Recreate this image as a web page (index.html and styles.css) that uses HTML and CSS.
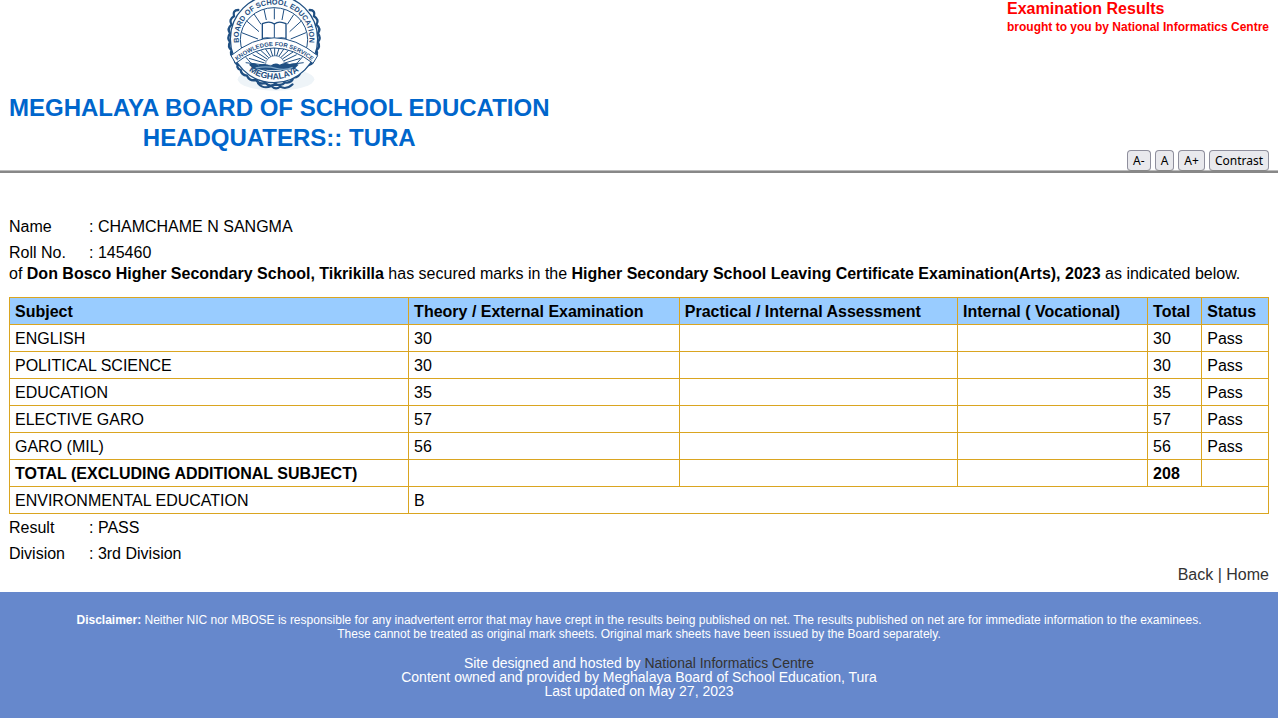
FILE: index.html
```html
<!DOCTYPE html>
<html lang="en">
<head>
<meta charset="utf-8">
<meta name="viewport" content="width=device-width, initial-scale=1">
<title>Examination Results</title>
<link rel="stylesheet" href="styles.css">
</head>
<body>
<header class="site-header">
  <div class="brand">
    <svg class="crest" viewBox="14 0 360 279" role="img" aria-label="Board of School Education Meghalaya crest">
      <defs>
        <path id="arc-top" d="M86 163A106 101 0 1 1 272 163"/>
        <path id="arc-bottom" d="M70 172A123 123 0 0 0 288 172"/>
        <path id="arc-motto" d="M66 184Q179 92 294 184"/>
      </defs>
      <ellipse cx="185" cy="238" rx="115" ry="34" fill="#eef4f8"/>
      <g fill="none" stroke="#1f4f82" stroke-width="7" stroke-linecap="round">
        <path d="M72 30q-18 0-13 19q-17 10-7 25q-15 12-5 26q-10 14 0 26q-8 14 5 25q-8 13 9 22q-3 16 13 22"/>
        <path d="M286 30q18 0 13 19q17 10 7 25q15 12 5 26q10 14 0 26q8 14-5 25q8 13-9 22q3 16-13 22"/>
        <path d="M72 190q-8 14 7 20q2 15 19 17q8 17 27 13q12 16 27 8q16 16 31 3q18 10 29-4q19 4 25-14q18-2 21-18q17-6 11-20"/>
        <path d="M131 250q17 19 40 8q13 13 26 2q20 10 38-7" stroke-width="6"/>
      </g>
      <circle cx="179" cy="117" r="131" fill="#fbfdfe" stroke="#1f4f82" stroke-width="4"/>
      <ellipse cx="179" cy="119" rx="101" ry="96" fill="#fff" stroke="#1f4f82" stroke-width="3"/>
      <g stroke="#1f4f82" stroke-width="3" fill="none">
        <path d="M156 60L149 28M180 58V25M203 60L209 28M140 73L119 42M219 73L238 44M134 95L96 62M226 95L262 62M131 117L82 98M229 117L275 98"/>
      </g>
      <path d="M144 71Q166 61 180 72Q194 61 215 71V116Q196 110 180 120Q164 110 144 116Z" fill="#fff" stroke="#1f4f82" stroke-width="4"/>
      <path d="M180 72V118" stroke="#1f4f82" stroke-width="3"/>
      <g stroke="#1f4f82" stroke-width="3">
        <path d="M150 195L94 188M151 189L104 175M154 183L115 164M158 177L126 156M163 173L138 150M169 170L153 146M175 168L167 143M181 167V142M187 168L195 143M193 170L209 146M199 173L224 150M204 177L236 156M208 183L247 164M211 189L258 175M212 195L268 188"/>
      </g>
      <path d="M153 196A29 29 0 0 1 211 196Z" fill="#fff" stroke="#1f4f82" stroke-width="2"/>
      <path d="M104 194Q118 185 132 196Q151 188 169 197Q183 185 196 194Q213 185 226 193Q240 188 253 194L240 207Q179 214 118 207Z" fill="#1f4f82"/>
      <path d="M124 204Q157 197 185 205T235 202" fill="none" stroke="#7ea6c8" stroke-width="4"/>
      <path d="M50 167Q179 60 310 167L296 190Q179 98 64 190Z" fill="#fff" stroke="#1f4f82" stroke-width="3"/>
      <g class="crest-text">
        <text font-size="22"><textPath href="#arc-top" startOffset="50%">BOARD OF SCHOOL EDUCATION</textPath></text>
        <text font-size="26"><textPath href="#arc-bottom" startOffset="50%">MEGHALAYA</textPath></text>
        <text font-size="18"><textPath href="#arc-motto" startOffset="50%">KNOWLEDGE FOR SERVICE</textPath></text>
      </g>
    </svg>
    <h1 class="board-name">MEGHALAYA BOARD OF SCHOOL EDUCATION<br>HEADQUATERS:: TURA</h1>
  </div>
  <div class="header-side">
    <div class="credit">
      <h2 class="credit-title">Examination Results</h2>
      <p class="credit-by">brought to you by National Informatics Centre</p>
    </div>
    <div class="tools">
      <button type="button">A-</button>
      <button type="button">A</button>
      <button type="button">A+</button>
      <button type="button">Contrast</button>
    </div>
  </div>
</header>
<main class="content">
  <dl class="details">
    <dt>Name</dt><dd>: CHAMCHAME N SANGMA</dd>
    <dt>Roll No.</dt><dd>: 145460</dd>
  </dl>
  <p class="statement">of <b>Don Bosco Higher Secondary School, Tikrikilla</b> has secured marks in the <b>Higher Secondary School Leaving Certificate Examination(Arts), 2023</b> as indicated below.</p>
  <table class="marks">
    <colgroup>
      <col class="col-subject"><col class="col-theory"><col class="col-practical"><col class="col-internal"><col class="col-total"><col class="col-status">
    </colgroup>
    <thead>
      <tr><th>Subject</th><th>Theory / External Examination</th><th>Practical / Internal Assessment</th><th>Internal ( Vocational)</th><th>Total</th><th>Status</th></tr>
    </thead>
    <tbody>
      <tr><td>ENGLISH</td><td>30</td><td></td><td></td><td>30</td><td>Pass</td></tr>
      <tr><td>POLITICAL SCIENCE</td><td>30</td><td></td><td></td><td>30</td><td>Pass</td></tr>
      <tr><td>EDUCATION</td><td>35</td><td></td><td></td><td>35</td><td>Pass</td></tr>
      <tr><td>ELECTIVE GARO</td><td>57</td><td></td><td></td><td>57</td><td>Pass</td></tr>
      <tr><td>GARO (MIL)</td><td>56</td><td></td><td></td><td>56</td><td>Pass</td></tr>
      <tr class="total-row"><td>TOTAL (EXCLUDING ADDITIONAL SUBJECT)</td><td></td><td></td><td></td><td>208</td><td></td></tr>
      <tr><td>ENVIRONMENTAL EDUCATION</td><td colspan="5">B</td></tr>
    </tbody>
  </table>
  <dl class="details">
    <dt>Result</dt><dd>: PASS</dd>
    <dt>Division</dt><dd>: 3rd Division</dd>
  </dl>
  <nav class="page-links"><a href="#back">Back</a> | <a href="#home">Home</a></nav>
</main>
<footer class="site-footer">
  <p class="disclaimer"><b>Disclaimer:</b> Neither NIC nor MBOSE is responsible for any inadvertent error that may have crept in the results being published on net. The results published on net are for immediate information to the examinees.<br>These cannot be treated as original mark sheets. Original mark sheets have been issued by the Board separately.</p>
  <p class="ownership">Site designed and hosted by <a href="#nic">National Informatics Centre</a><br>Content owned and provided by Meghalaya Board of School Education, Tura<br>Last updated on May 27, 2023</p>
</footer>
</body>
</html>
```

FILE: styles.css
```css
* {
  box-sizing: border-box;
}

body {
  margin: 0;
  background: #fff;
  color: #000;
  font: 16px/16px "Liberation Sans", Arial, sans-serif;
}

h1, h2, p, dl, dd {
  margin: 0;
}

a {
  color: #333;
  text-decoration: none;
}

.site-header {
  display: flex;
  justify-content: space-between;
  padding: 0 9px;
  border-bottom: 2px solid #888;
  box-shadow: inset 0 -1px #bbb;
}

.brand {
  display: flex;
  flex-direction: column;
  align-items: center;
  padding-bottom: 18px;
}

.crest {
  display: block;
  width: 120px;
  height: 93px;
}

.crest-text {
  fill: #1f4f82;
  font-family: "Liberation Sans", Arial, sans-serif;
  font-weight: bold;
  text-anchor: middle;
}

.board-name {
  color: #06c;
  font-size: 24px;
  line-height: 30px;
  text-align: center;
}

.header-side {
  display: flex;
  flex-direction: column;
  justify-content: space-between;
}

.credit {
  color: #f00;
  font-weight: bold;
}

.credit-title {
  font-size: 16px;
  line-height: 18px;
}

.credit-by {
  font-size: 12px;
  line-height: 18px;
}

.tools {
  display: flex;
  justify-content: flex-end;
  gap: 4px;
}

.tools button {
  height: 21px;
  padding: 1px 5px 0;
  border: 1px solid #8f8f9d;
  border-bottom-color: #888;
  border-radius: 4px;
  background: #e9e9ed;
  color: #000;
  font: 12px/18px "Noto Sans", Tahoma, sans-serif;
}

.content {
  padding: 41px 9px 9px;
}

.details {
  display: grid;
  grid-template-columns: 80px 1fr;
  line-height: 26px;
}

.statement {
  margin-bottom: 15px;
}

.marks {
  width: 100%;
  margin-bottom: 1px;
  table-layout: fixed;
  border-collapse: collapse;
}

.marks th,
.marks td {
  height: 27px;
  padding: 2px 5px 0;
  border: 1px solid #daa520;
  text-align: left;
}

.marks th {
  background: #9cf;
}

.total-row {
  font-weight: bold;
}

.col-subject { width: 31.7%; }
.col-theory { width: 21.5%; }
.col-practical { width: 22.1%; }
.col-internal { width: 15.1%; }
.col-total { width: 4.3%; }
.col-status { width: 5.3%; }

.page-links {
  color: #333;
  text-align: right;
}

.site-footer {
  padding: 21px 9px 20px;
  background: #68c;
  color: #fff;
  line-height: 14px;
  text-align: center;
}

.disclaimer {
  margin-bottom: 15px;
  font-size: 12px;
}

.ownership {
  font-size: 14px;
}
```
